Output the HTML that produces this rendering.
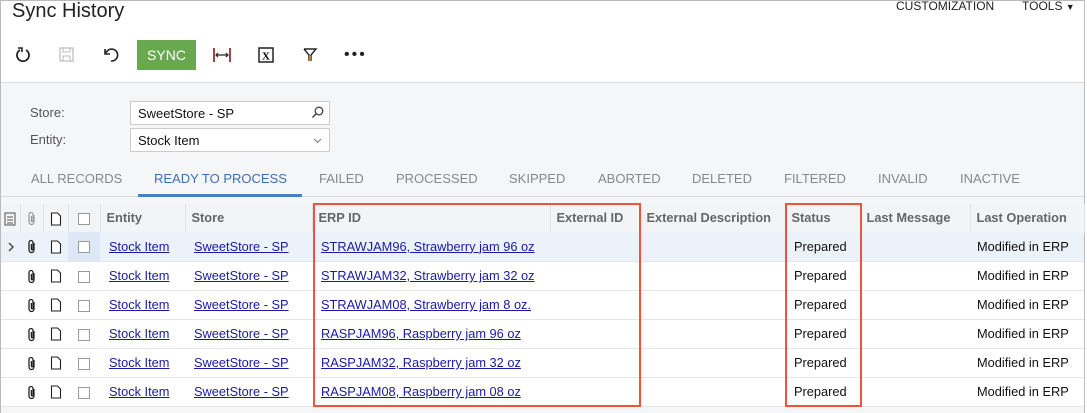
<!DOCTYPE html>
<html><head><style>
*{box-sizing:border-box;margin:0;padding:0}
body{width:1087px;height:413px;overflow:hidden;background:#fff;font-family:"Liberation Sans",sans-serif;position:relative}
.frame{position:absolute;left:0;top:0;width:1085px;height:413px;border-left:1px solid #bbb;border-right:1px solid #bbb;border-top:1px solid #bbb}
.abs{position:absolute;white-space:nowrap}
.title{left:12px;top:0px;font-size:20px;color:#222}
.menu{top:-1px;font-size:12px;color:#222}
.gray{position:absolute;left:1px;top:82px;width:1083px;height:331px;background:#f5f6f8;border-top:1px solid #ddd}
.lbl{font-size:13px;color:#555}
.inp{position:absolute;left:130px;width:200px;height:24px;background:#fff;border:1px solid #ccc;font-size:13px;color:#111;padding:4px 7px}
.tab{top:171px;font-size:13px;color:#888}
table{position:absolute;left:1px;top:204px;border-collapse:collapse;font-size:12.8px;background:#fff;table-layout:fixed}
td{height:29px;border-bottom:1px solid #e6e6e6;padding:0 0 0 9px;white-space:nowrap;color:#111;overflow:hidden}
td.ic{padding:0;text-align:center}
tr.h td{background:#f3f4f6;color:#666;font-weight:bold;height:28px;border-right:1px solid #e2e2e2;padding-left:6px}
tr.h td.ic{padding:0}
tr.sel td{background:#ebf2fa}
a{color:#1a1aa6;text-decoration:underline}
.cb{display:inline-block;width:12px;height:12px;border:1px solid #999;background:#fff;vertical-align:middle}
.red{position:absolute;border:2px solid #f0533a}
svg{vertical-align:middle}
</style></head><body>
<div class="frame"></div>
<div class="abs title">Sync History</div>
<div class="abs menu" style="left:896px">CUSTOMIZATION</div>
<div class="abs menu" style="left:1022px">TOOLS <span style="font-size:9px">▼</span></div>
<svg class="abs" style="left:14px;top:45px" width="20" height="20" viewBox="0 0 20 20"><path d="M6 5a6 6 0 1 0 6 0" fill="none" stroke="#222" stroke-width="1.8"/><path d="M4 3h4v4" fill="none" stroke="#222" stroke-width="1.6"/></svg>
<svg class="abs" style="left:58px;top:46px" width="18" height="18" viewBox="0 0 18 18"><rect x="2" y="2" width="13" height="13" fill="none" stroke="#bbb" stroke-width="1.2"/><rect x="5" y="2" width="7" height="4" fill="none" stroke="#bbb"/><rect x="5" y="10" width="7" height="5" fill="none" stroke="#bbb"/></svg>
<svg class="abs" style="left:102px;top:46px" width="20" height="18" viewBox="0 0 20 18"><path d="M4 7a6 6 0 1 1 5 8" fill="none" stroke="#222" stroke-width="1.6"/><path d="M3 3v5h5" fill="none" stroke="#222" stroke-width="1.6"/></svg>
<div class="abs" style="left:137px;top:40px;width:59px;height:30px;background:#6aa84f;color:#fff;font-size:14px;text-align:center;line-height:30px">SYNC</div>
<svg class="abs" style="left:212px;top:46px" width="20" height="18" viewBox="0 0 20 18"><path d="M2 2v14M18 2v14" stroke="#7a1c1c" stroke-width="1.6"/><path d="M4 9h12M6 7l-2 2 2 2M14 7l2 2-2 2" fill="none" stroke="#222" stroke-width="1.2"/></svg>
<svg class="abs" style="left:258px;top:47px" width="16" height="16" viewBox="0 0 16 16"><rect x="1" y="1" width="14" height="14" fill="none" stroke="#222" stroke-width="1.5"/><text x="8" y="12.5" font-size="11" font-weight="bold" text-anchor="middle" font-family="Liberation Serif">X</text></svg>
<svg class="abs" style="left:302px;top:46px" width="16" height="18" viewBox="0 0 16 18"><path d="M2 3h12l-5 6v6M7 15V9L2 3" fill="none" stroke="#222" stroke-width="1.4"/><path d="M8 10v5" stroke="#e59a30" stroke-width="1.6"/></svg>
<div class="abs" style="left:344px;top:46px;font-size:16px;color:#222;letter-spacing:2px">•••</div>
<div class="gray"></div>
<div class="abs lbl" style="left:30px;top:105px">Store:</div>
<div class="abs lbl" style="left:30px;top:132px">Entity:</div>
<div class="inp" style="top:101px">SweetStore - SP<svg style="position:absolute;right:5px;top:4px" width="13" height="13" viewBox="0 0 13 13"><circle cx="8" cy="5" r="3.8" fill="none" stroke="#444" stroke-width="1.3"/><path d="M5.3 7.7L1.5 11.5" stroke="#444" stroke-width="1.5"/></svg></div>
<div class="inp" style="top:128px">Stock Item<svg style="position:absolute;right:7px;top:9px" width="9" height="6" viewBox="0 0 9 6"><path d="M1 1l3.5 3.5L8 1" fill="none" stroke="#777" stroke-width="1"/></svg></div>
<div class="abs" style="left:1px;top:196px;width:1083px;height:1px;background:#ddd"></div>
<div class="abs" style="left:138px;top:194px;width:164px;height:3px;background:#4a7fc8"></div>
<div class="abs tab" style="left:31px">ALL RECORDS</div>
<div class="abs tab" style="left:154px;color:#3a6fb8">READY TO PROCESS</div>
<div class="abs tab" style="left:319px">FAILED</div>
<div class="abs tab" style="left:396px">PROCESSED</div>
<div class="abs tab" style="left:509px">SKIPPED</div>
<div class="abs tab" style="left:598px">ABORTED</div>
<div class="abs tab" style="left:692px">DELETED</div>
<div class="abs tab" style="left:784px">FILTERED</div>
<div class="abs tab" style="left:878px">INVALID</div>
<div class="abs tab" style="left:960px">INACTIVE</div>
<table>
<colgroup><col width="19"><col width="23"><col width="25"><col width="32"><col width="85"><col width="127"><col width="238"><col width="90"><col width="145"><col width="75"><col width="110"><col width="114"></colgroup>
<tr class="h"><td class="ic"><svg width="12" height="14" viewBox="0 0 12 14"><rect x="1" y="1" width="10" height="12" fill="none" stroke="#777" stroke-width="1.3"/><path d="M3 5h6M3 8h6M3 11h6" stroke="#777" stroke-width="1.3"/></svg></td><td class="ic"><svg width="10" height="15" viewBox="0 0 10 15"><path d="M7 4v7a2.5 2.5 0 0 1-5 0V3.5a2 2 0 0 1 4 0V10a.8.8 0 0 1-1.6 0V5" fill="none" stroke="#999" stroke-width="1.2"/></svg></td><td class="ic"><svg width="12" height="14" viewBox="0 0 12 14"><path d="M1.5 1h6l3 3v9h-9z" fill="#fff" stroke="#222" stroke-width="1.1"/></svg></td><td class="ic"><span class="cb"></span></td><td>Entity</td><td>Store</td><td>ERP ID</td><td>External ID</td><td>External Description</td><td>Status</td><td>Last Message</td><td>Last Operation</td></tr>
</table>
<table style="top:232px">
<colgroup><col width="19"><col width="23"><col width="25"><col width="32"><col width="85"><col width="127"><col width="238"><col width="90"><col width="145"><col width="75"><col width="110"><col width="114"></colgroup>
<tr class="sel"><td class="ic"><svg width="8" height="12" viewBox="0 0 8 12"><path d="M2 2l4 4-4 4" fill="none" stroke="#444" stroke-width="1.4"/></svg></td><td class="ic"><svg width="10" height="15" viewBox="0 0 10 15"><path d="M7 4v7a2.5 2.5 0 0 1-5 0V3.5a2 2 0 0 1 4 0V10a.8.8 0 0 1-1.6 0V5" fill="none" stroke="#222" stroke-width="1.3"/></svg></td><td class="ic"><svg width="12" height="14" viewBox="0 0 12 14"><path d="M1.5 1h6l3 3v9h-9z" fill="#fff" stroke="#222" stroke-width="1.1"/></svg></td><td class="ic" style="background:#dce8f5"><span class="cb"></span></td><td><a>Stock Item</a></td><td><a>SweetStore - SP</a></td><td><a>STRAWJAM96, Strawberry jam 96 oz</a></td><td></td><td></td><td>Prepared</td><td></td><td style="padding-left:7px">Modified in ERP</td></tr>
<tr><td></td><td class="ic"><svg width="10" height="15" viewBox="0 0 10 15"><path d="M7 4v7a2.5 2.5 0 0 1-5 0V3.5a2 2 0 0 1 4 0V10a.8.8 0 0 1-1.6 0V5" fill="none" stroke="#222" stroke-width="1.3"/></svg></td><td class="ic"><svg width="12" height="14" viewBox="0 0 12 14"><path d="M1.5 1h6l3 3v9h-9z" fill="#fff" stroke="#222" stroke-width="1.1"/></svg></td><td class="ic"><span class="cb"></span></td><td><a>Stock Item</a></td><td><a>SweetStore - SP</a></td><td><a>STRAWJAM32, Strawberry jam 32 oz</a></td><td></td><td></td><td>Prepared</td><td></td><td style="padding-left:7px">Modified in ERP</td></tr>
<tr><td></td><td class="ic"><svg width="10" height="15" viewBox="0 0 10 15"><path d="M7 4v7a2.5 2.5 0 0 1-5 0V3.5a2 2 0 0 1 4 0V10a.8.8 0 0 1-1.6 0V5" fill="none" stroke="#222" stroke-width="1.3"/></svg></td><td class="ic"><svg width="12" height="14" viewBox="0 0 12 14"><path d="M1.5 1h6l3 3v9h-9z" fill="#fff" stroke="#222" stroke-width="1.1"/></svg></td><td class="ic"><span class="cb"></span></td><td><a>Stock Item</a></td><td><a>SweetStore - SP</a></td><td><a>STRAWJAM08, Strawberry jam 8 oz.</a></td><td></td><td></td><td>Prepared</td><td></td><td style="padding-left:7px">Modified in ERP</td></tr>
<tr><td></td><td class="ic"><svg width="10" height="15" viewBox="0 0 10 15"><path d="M7 4v7a2.5 2.5 0 0 1-5 0V3.5a2 2 0 0 1 4 0V10a.8.8 0 0 1-1.6 0V5" fill="none" stroke="#222" stroke-width="1.3"/></svg></td><td class="ic"><svg width="12" height="14" viewBox="0 0 12 14"><path d="M1.5 1h6l3 3v9h-9z" fill="#fff" stroke="#222" stroke-width="1.1"/></svg></td><td class="ic"><span class="cb"></span></td><td><a>Stock Item</a></td><td><a>SweetStore - SP</a></td><td><a>RASPJAM96, Raspberry jam 96 oz</a></td><td></td><td></td><td>Prepared</td><td></td><td style="padding-left:7px">Modified in ERP</td></tr>
<tr><td></td><td class="ic"><svg width="10" height="15" viewBox="0 0 10 15"><path d="M7 4v7a2.5 2.5 0 0 1-5 0V3.5a2 2 0 0 1 4 0V10a.8.8 0 0 1-1.6 0V5" fill="none" stroke="#222" stroke-width="1.3"/></svg></td><td class="ic"><svg width="12" height="14" viewBox="0 0 12 14"><path d="M1.5 1h6l3 3v9h-9z" fill="#fff" stroke="#222" stroke-width="1.1"/></svg></td><td class="ic"><span class="cb"></span></td><td><a>Stock Item</a></td><td><a>SweetStore - SP</a></td><td><a>RASPJAM32, Raspberry jam 32 oz</a></td><td></td><td></td><td>Prepared</td><td></td><td style="padding-left:7px">Modified in ERP</td></tr>
<tr><td></td><td class="ic"><svg width="10" height="15" viewBox="0 0 10 15"><path d="M7 4v7a2.5 2.5 0 0 1-5 0V3.5a2 2 0 0 1 4 0V10a.8.8 0 0 1-1.6 0V5" fill="none" stroke="#222" stroke-width="1.3"/></svg></td><td class="ic"><svg width="12" height="14" viewBox="0 0 12 14"><path d="M1.5 1h6l3 3v9h-9z" fill="#fff" stroke="#222" stroke-width="1.1"/></svg></td><td class="ic"><span class="cb"></span></td><td><a>Stock Item</a></td><td><a>SweetStore - SP</a></td><td><a>RASPJAM08, Raspberry jam 08 oz</a></td><td></td><td></td><td>Prepared</td><td></td><td style="padding-left:7px">Modified in ERP</td></tr>
</table>
<div class="red" style="left:313px;top:203px;width:328px;height:204px"></div>
<div class="red" style="left:785px;top:203px;width:77px;height:204px"></div>
</body></html>
